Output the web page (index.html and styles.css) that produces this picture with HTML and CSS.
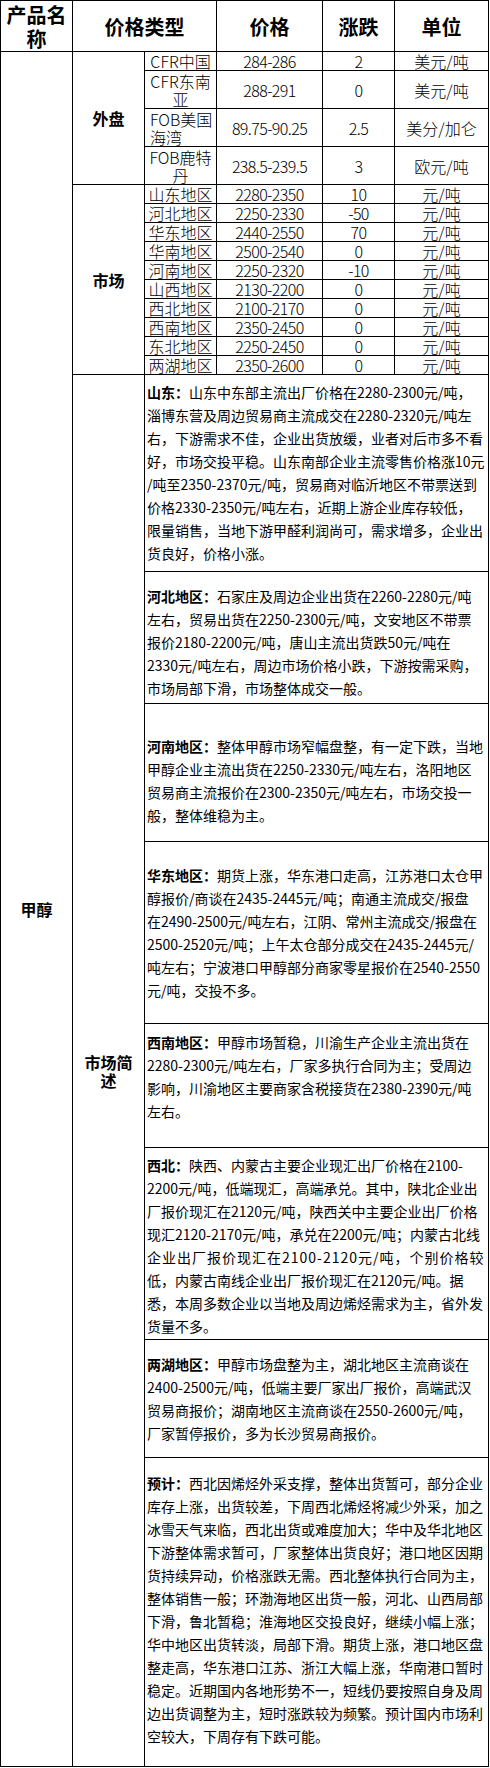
FILE: index.html
```html
<!DOCTYPE html>
<html lang="zh-CN">
<head>
<meta charset="utf-8">
<title>甲醇价格</title>
<link rel="stylesheet" href="styles.css">
</head>
<body>
<table class="quote">
  <colgroup>
    <col class="c1"><col class="c2"><col class="c3"><col class="c4"><col class="c5"><col class="c6">
  </colgroup>
  <thead>
    <tr>
      <th class="hd">产品名称</th>
      <th class="hd" colspan="2">价格类型</th>
      <th class="hd">价格</th>
      <th class="hd">涨跌</th>
      <th class="hd">单位</th>
    </tr>
  </thead>
  <tbody>
    <tr class="r1">
      <td class="label" rowspan="22">甲醇</td>
      <td class="label" rowspan="4">外盘</td>
      <td class="cell">CFR中国</td><td class="cell num">284-286</td><td class="cell num">2</td><td class="cell">美元/吨</td>
    </tr>
    <tr class="r2">
      <td class="cell">CFR东南亚</td><td class="cell num">288-291</td><td class="cell num">0</td><td class="cell">美元/吨</td>
    </tr>
    <tr class="r2">
      <td class="cell start">FOB美国海湾</td><td class="cell num">89.75-90.25</td><td class="cell num">2.5</td><td class="cell">美分/加仑</td>
    </tr>
    <tr class="r2">
      <td class="cell">FOB鹿特丹</td><td class="cell num">238.5-239.5</td><td class="cell num">3</td><td class="cell">欧元/吨</td>
    </tr>
    <tr class="r1">
      <td class="label" rowspan="10">市场</td>
      <td class="cell">山东地区</td><td class="cell num">2280-2350</td><td class="cell num">10</td><td class="cell">元/吨</td>
    </tr>
    <tr class="r1"><td class="cell">河北地区</td><td class="cell num">2250-2330</td><td class="cell num">-50</td><td class="cell">元/吨</td></tr>
    <tr class="r1"><td class="cell">华东地区</td><td class="cell num">2440-2550</td><td class="cell num">70</td><td class="cell">元/吨</td></tr>
    <tr class="r1"><td class="cell">华南地区</td><td class="cell num">2500-2540</td><td class="cell num">0</td><td class="cell">元/吨</td></tr>
    <tr class="r1"><td class="cell">河南地区</td><td class="cell num">2250-2320</td><td class="cell num">-10</td><td class="cell">元/吨</td></tr>
    <tr class="r1"><td class="cell">山西地区</td><td class="cell num">2130-2200</td><td class="cell num">0</td><td class="cell">元/吨</td></tr>
    <tr class="r1"><td class="cell">西北地区</td><td class="cell num">2100-2170</td><td class="cell num">0</td><td class="cell">元/吨</td></tr>
    <tr class="r1"><td class="cell">西南地区</td><td class="cell num">2350-2450</td><td class="cell num">0</td><td class="cell">元/吨</td></tr>
    <tr class="r1"><td class="cell">东北地区</td><td class="cell num">2250-2450</td><td class="cell num">0</td><td class="cell">元/吨</td></tr>
    <tr class="r1"><td class="cell">两湖地区</td><td class="cell num">2350-2600</td><td class="cell num">0</td><td class="cell">元/吨</td></tr>
    <tr>
      <td class="label" rowspan="8">市场简述</td>
      <td class="desc d1" colspan="4"><b>山东：</b>山东中东部主流出厂价格在2280-2300元/吨，<br>淄博东营及周边贸易商主流成交在2280-2320元/吨左<br>右，下游需求不佳，企业出货放缓，业者对后市多不看<br>好，市场交投平稳。山东南部企业主流零售价格涨10元<br>/吨至2350-2370元/吨，贸易商对临沂地区不带票送到<br>价格2330-2350元/吨左右，近期上游企业库存较低，<br>限量销售，当地下游甲醛利润尚可，需求增多，企业出<br>货良好，价格小涨。</td>
    </tr>
    <tr>
      <td class="desc d2" colspan="4"><b>河北地区：</b>石家庄及周边企业出货在2260-2280元/吨<br>左右，贸易出货在2250-2300元/吨，文安地区不带票<br>报价2180-2200元/吨，唐山主流出货跌50元/吨在<br>2330元/吨左右，周边市场价格小跌，下游按需采购，<br>市场局部下滑，市场整体成交一般。</td>
    </tr>
    <tr>
      <td class="desc d3" colspan="4"><b>河南地区：</b>整体甲醇市场窄幅盘整，有一定下跌，当地<br>甲醇企业主流出货在2250-2330元/吨左右，洛阳地区<br>贸易商主流报价在2300-2350元/吨左右，市场交投一<br>般，整体维稳为主。</td>
    </tr>
    <tr>
      <td class="desc d4" colspan="4"><b>华东地区：</b>期货上涨，华东港口走高，江苏港口太仓甲<br>醇报价/商谈在2435-2445元/吨；南通主流成交/报盘<br>在2490-2500元/吨左右，江阴、常州主流成交/报盘在<br>2500-2520元/吨；上午太仓部分成交在2435-2445元/<br>吨左右；宁波港口甲醇部分商家零星报价在2540-2550<br>元/吨，交投不多。</td>
    </tr>
    <tr>
      <td class="desc d5" colspan="4"><b>西南地区：</b>甲醇市场暂稳，川渝生产企业主流出货在<br>2280-2300元/吨左右，厂家多执行合同为主；受周边<br>影响，川渝地区主要商家含税接货在2380-2390元/吨<br>左右。</td>
    </tr>
    <tr>
      <td class="desc d6" colspan="4"><b>西北：</b>陕西、内蒙古主要企业现汇出厂价格在2100-<br>2200元/吨，低端现汇，高端承兑。其中，陕北企业出<br>厂报价现汇在2120元/吨，陕西关中主要企业出厂价格<br>现汇2120-2170元/吨，承兑在2200元/吨；内蒙古北线<br><span class="spread">企业出厂报价现汇在2100-2120元/吨，个别价格较</span><br>低，内蒙古南线企业出厂报价现汇在2120元/吨。据<br>悉，本周多数企业以当地及周边烯烃需求为主，省外发<br>货量不多。</td>
    </tr>
    <tr>
      <td class="desc d7" colspan="4"><b>两湖地区：</b>甲醇市场盘整为主，湖北地区主流商谈在<br>2400-2500元/吨，低端主要厂家出厂报价，高端武汉<br>贸易商报价；湖南地区主流商谈在2550-2600元/吨，<br>厂家暂停报价，多为长沙贸易商报价。</td>
    </tr>
    <tr>
      <td class="desc d8" colspan="4"><b>预计：</b>西北因烯烃外采支撑，整体出货暂可，部分企业<br>库存上涨，出货较差，下周西北烯烃将减少外采，加之<br>冰雪天气来临，西北出货或难度加大；华中及华北地区<br>下游整体需求暂可，厂家整体出货良好；港口地区因期<br>货持续异动，价格涨跌无需。西北整体执行合同为主，<br>整体销售一般；环渤海地区出货一般，河北、山西局部<br>下滑，鲁北暂稳；淮海地区交投良好，继续小幅上涨；<br>华中地区出货转淡，局部下滑。期货上涨，港口地区盘<br>整走高，华东港口江苏、浙江大幅上涨，华南港口暂时<br>稳定。近期国内各地形势不一，短线仍要按照自身及周<br>边出货调整为主，短时涨跌较为频繁。预计国内市场利<br>空较大，下周存有下跌可能。</td>
    </tr>
  </tbody>
</table>
</body>
</html>
```

FILE: styles.css
```css
html, body {
  margin: 0;
  padding: 0;
  background: #fff;
}

body {
  font-family: "Noto Sans CJK SC", "Noto Sans", sans-serif;
  color: #000;
}

.quote {
  border-collapse: collapse;
  table-layout: fixed;
  width: 488px;
}

.c1, .c2, .c3, .c5 { width: 72px; }
.c4 { width: 106px; }
.c6 { width: 94px; }

.quote th,
.quote td {
  border: 1px solid #000;
  padding: 0 5px;
  text-align: center;
  vertical-align: middle;
}

.quote th.hd {
  font-size: 20px;
  font-weight: bold;
  line-height: 24px;
  height: 49px;
  padding: 1px 4px 0;
}

.label {
  font-size: 16px;
  font-weight: bold;
  line-height: 18px;
}

.quote td.cell {
  font-size: 16px;
  font-weight: 300;
  line-height: 18px;
  padding: 0 1px;
}

.quote td.start {
  text-align: left;
  padding-left: 5px;
}

.num {
  letter-spacing: -0.6px;
}

.quote .r2 td.cell {
  padding-top: 1px;
}

.quote td.desc {
  font-size: 14px;
  line-height: 23px;
  text-align: left;
  vertical-align: top;
  padding-left: 2px;
  padding-right: 0;
}

.desc b {
  font-weight: bold;
}

.spread {
  letter-spacing: 1px;
}

.quote td.d1 { padding-top: 6px;  padding-bottom: 6px; }
.quote td.d2 { padding-top: 13px; padding-bottom: 3px; }
.quote td.d3 { padding-top: 31px; padding-bottom: 14px; }
.quote td.d4 { padding-top: 22px; padding-bottom: 21px; }
.quote td.d5 { padding-top: 7px;  padding-bottom: 24px; }
.quote td.d6 { padding-top: 6px;  padding-bottom: 1px; }
.quote td.d7 { padding-top: 13px; padding-bottom: 12px; }
.quote td.d8 { padding-top: 14px; padding-bottom: 18px; }
```
